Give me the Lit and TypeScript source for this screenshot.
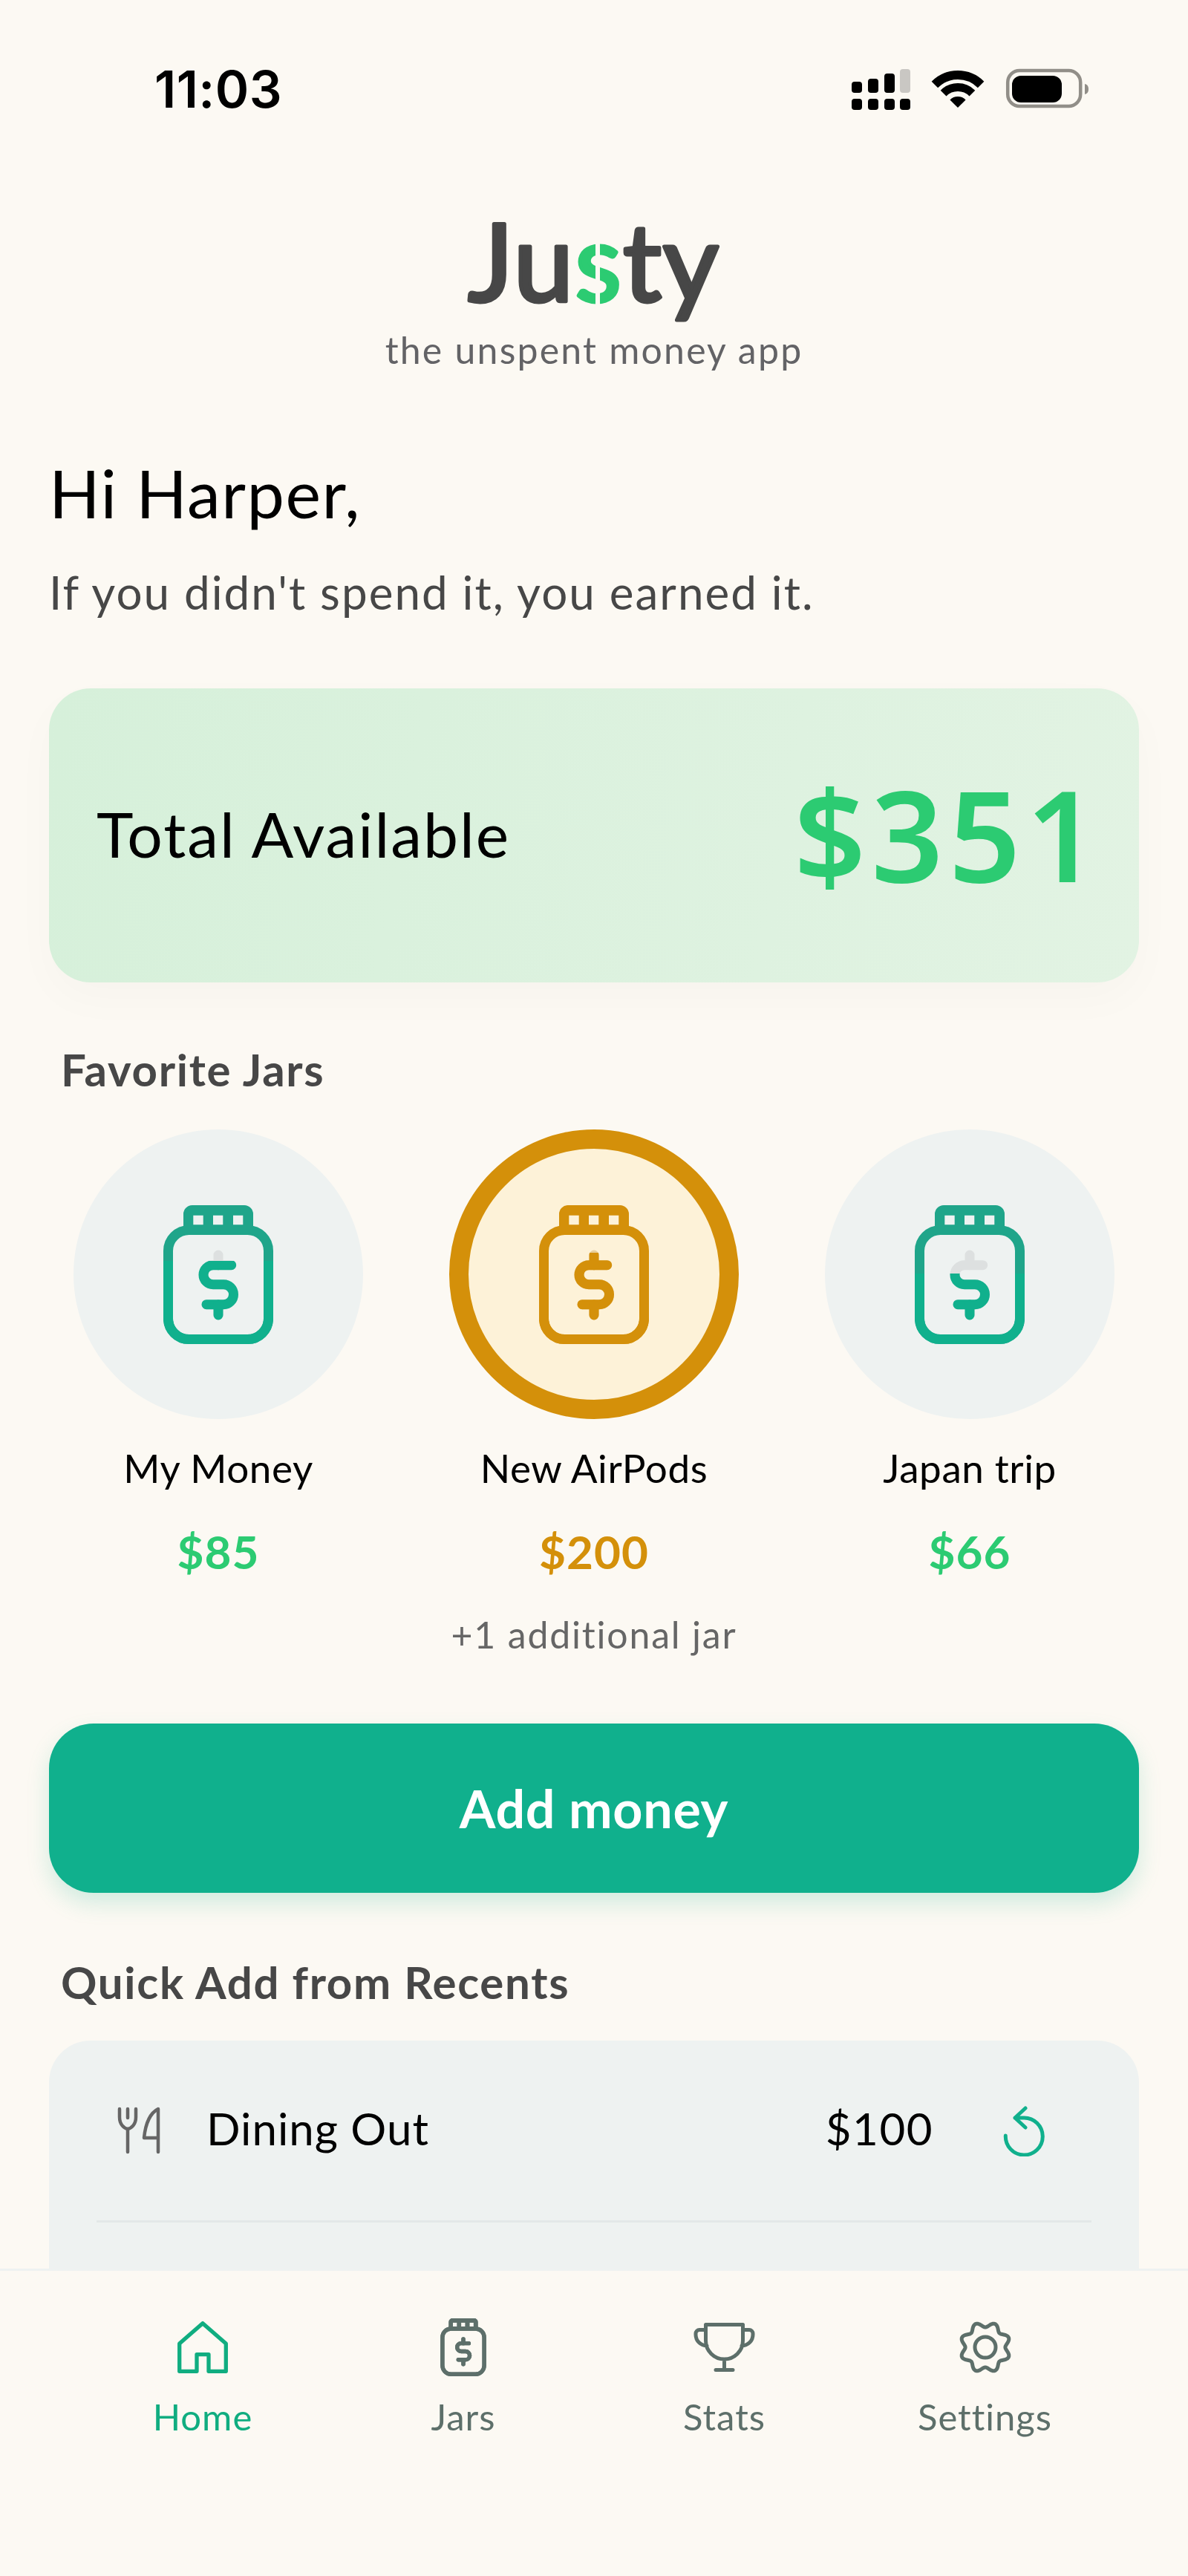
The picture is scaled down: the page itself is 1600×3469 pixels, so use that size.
import { LitElement, html, css, svg } from "lit";
import { customElement } from "lit/decorators.js";

const dollar = (c: string) => svg`<g fill="none" stroke="${c}" stroke-width="13" stroke-linecap="round" stroke-linejoin="round">
  <path d="M91.7 80.7H67a13 13 0 0 0 0 26H81a13.5 13.5 0 0 1 0 27H58"/><path d="M74 67V80.7M74 134V148"/></g>`;
const jarShell = (c: string) => svg`
  <rect x="6.5" y="33.5" width="135" height="147" rx="28" fill="none" stroke="${c}" stroke-width="13"/>
  <path fill="${c}" fill-rule="evenodd" d="M27 32V12A12 12 0 0 1 39 0H109A12 12 0 0 1 121 12V32ZM40.3 13.7V26.3H53.7V13.7ZM67 13.7V26.3H80.3V13.7ZM94 13.7V26.3H107.3V13.7Z"/>`;

function jar(id: string, level: number, top: string, bottom: string, dollarTop: string, cls = "jar") {
  return html`<svg class=${cls} viewBox="0 0 148 187">
    <defs><clipPath id=${id}><rect x="0" y=${level} width="148" height=${187 - level}></rect></clipPath></defs>
    ${jarShell(top)}${dollar(dollarTop)}
    <g clip-path="url(#${id})">${jarShell(bottom)}${dollar(bottom)}</g>
  </svg>`;
}

function gearPath() {
  const pts: string[] = [];
  for (let i = 0; i < 120; i++) {
    const t = (i / 120) * Math.PI * 2;
    const r = 30.5 - 3.6 * Math.cos(8 * t);
    pts.push(`${(37 + r * Math.sin(t)).toFixed(2)} ${(36 - r * Math.cos(t)).toFixed(2)}`);
  }
  return "M" + pts.join("L") + "Z";
}

const JARS = [
  { name: "My Money", amount: "$85", level: 75, selected: false },
  { name: "New AirPods", amount: "$200", level: 64, selected: true },
  { name: "Japan trip", amount: "$66", level: 92, selected: false },
];

@customElement("app-root")
export class AppRoot extends LitElement {
  static styles = css`
    :host { display: block; width: 1600px; height: 3469px; background: #fcf9f3; font-family: "Lato", "Noto Sans", sans-serif; color: #000; }
    .app { height: 3469px; display: flex; flex-direction: column; background: #fcf9f3; }
    .scroll { flex: 1; min-height: 0; overflow: hidden; }
    .status { display: flex; justify-content: space-between; align-items: center; height: 72px; padding: 84px 133px 0 208px; }
    .time { font: 600 69px/72px "Inter", "Liberation Sans", sans-serif; letter-spacing: 0.5px; color: #000; }
    .status-icons { display: block; width: 320px; height: 56px; }
    .logo { display: block; width: 400px; height: 150px; margin: 142px auto 0; overflow: visible; }
    .logo text { font: 400 145px "Lato", sans-serif; letter-spacing: 2px; stroke-width: 5px; stroke-linejoin: round; }
    .tag { text-align: center; font-size: 50px; letter-spacing: 2.2px; line-height: 60px; color: #636366; margin-top: -7px; }
    .hi { font-size: 90px; letter-spacing: 1.5px; line-height: 110px; margin: 107px 0 0 66px; }
    .sub { font-size: 62px; letter-spacing: 2px; line-height: 80px; color: #474747; margin: 39px 0 0 66px; }
    .total { display: flex; justify-content: space-between; align-items: center; margin: 90px 66px 0; height: 396px; padding: 0 48px 0 64px; border-radius: 56px; background: linear-gradient(100deg, #d6f0da, #e2f3e3); box-shadow: 0 22px 60px rgba(0, 0, 0, 0.025); }
    .total-label { font-size: 84px; letter-spacing: 2px; line-height: 100px; padding-bottom: 4px; }
    .total-value { font-family: "Noto Sans", sans-serif; font-size: 170px; font-weight: 600; letter-spacing: 7px; line-height: 200px; padding-bottom: 6px; color: #2ccb72; }
    .section { font-size: 60px; font-weight: 700; letter-spacing: 1.7px; line-height: 76px; color: #474747; margin: 79px 0 0 82px; }
    .jars { display: grid; grid-template-columns: 506px 506px 506px; margin: 43px 0 0 41px; }
    .jar-item { display: flex; flex-direction: column; align-items: center; }
    .circle { width: 390px; height: 390px; border-radius: 50%; background: #eef2f1; display: flex; align-items: center; justify-content: center; box-sizing: border-box; }
    .circle.sel { background: #fdf2d8; border: 26px solid #d4900a; }
    .jar { display: block; width: 148px; height: 187px; }
    .jar-name { font-size: 53px; letter-spacing: 0.6px; line-height: 64px; margin-top: 34px; color: #000; }
    .jar-amount { font-size: 62px; font-weight: 700; letter-spacing: 1px; line-height: 76px; margin-top: 42px; color: #2ccb72; }
    .jar-amount.sel { color: #d4900a; }
    .more { text-align: center; font-size: 50px; letter-spacing: 1.8px; line-height: 64px; color: #666; margin-top: 42px; }
    .add { display: flex; align-items: center; justify-content: center; height: 228px; margin: 88px 66px 0; border-radius: 60px; background: #10b08d; color: #fff; font-size: 70px; font-weight: 700; letter-spacing: 0.7px; box-shadow: 0 14px 30px rgba(16, 176, 141, 0.18); }
    .section.q { margin-top: 82px; }
    .recents { margin: 41px 66px 0; padding: 0 64px; height: 500px; border-radius: 56px 56px 0 0; background: #eef2f1; }
    .row { display: flex; align-items: center; height: 242px; border-bottom: 3px solid #e3e8e8; }
    .fork { width: 64px; height: 68px; margin: 0 0 0 25px; display: block; }
    .row-name { font-size: 60px; letter-spacing: 1px; margin-left: 59px; flex: 1; padding-bottom: 6px; }
    .row-val { font-size: 60px; letter-spacing: 1.5px; padding-bottom: 6px; }
    .redo { width: 60px; height: 70px; display: block; margin: 0 60px 0 93px; }
    .nav { height: 414px; box-sizing: border-box; border-top: 3px solid #eef2f1; background: #fcf9f3; display: grid; grid-template-columns: 350px 352px 351px 351px; padding: 63px 0 0 98px; position: relative; }
    .nav-item { display: flex; flex-direction: column; align-items: center; color: #5d6f6a; font-size: 49px; letter-spacing: 1px; }
    .nav-item.on { color: #10ad80; }
    .nav-ico { height: 80px; display: flex; align-items: center; justify-content: center; }
    .nav-ico svg { display: block; }
    .nav-label { line-height: 64px; margin-top: 21px; }
    .jar.small { width: 62px; height: 78px; }
  `;

  render() {
    return html`<div class="app">
      <div class="scroll">
        <div class="status">
          <div class="time">11:03</div>
          <svg class="status-icons" viewBox="0 0 320 56">
            <g fill="#000">
              ${[0, 22, 44, 65].map((x) => svg`<rect x=${x} y="41" width="14" height="15" rx="4"></rect>`)}
              <rect x="0" y="18" width="14" height="15" rx="4"></rect>
              <rect x="22" y="14" width="14" height="19" rx="4"></rect>
              <rect x="44" y="7" width="14" height="26" rx="4"></rect>
            </g>
            <rect x="65" y="1" width="14" height="32" rx="4" fill="#c9c7c3"></rect>
            <g transform="translate(109 3)">
              <path d="M2.9 18.9A44 44 0 0 1 65.1 18.9" fill="none" stroke="#000" stroke-width="12"></path>
              <path d="M14.6 30.6A27.5 27.5 0 0 1 53.4 30.6" fill="none" stroke="#000" stroke-width="11"></path>
              <path d="M34 50L23.4 39.4A15 15 0 0 1 44.6 39.4Z" fill="#000"></path>
            </g>
            <rect x="210.2" y="3" width="98" height="48" rx="16" fill="none" stroke="#918e88" stroke-width="4.5"></rect>
            <rect x="216" y="10" width="67" height="36" rx="12" fill="#000"></rect>
            <path d="M314 21C318 22 319 25 319 28C319 31 318 34 314 35Z" fill="#918e88"></path>
          </svg>
        </div>
        <svg class="logo" viewBox="0 0 400 150">
          <text x="200" y="108" text-anchor="middle" fill="#474747" stroke="#474747">Ju<tspan fill="#2ccb72" stroke="#2ccb72">s</tspan>ty</text>
          <rect x="202" y="28" width="6" height="84" fill="#fcf9f3"></rect>
        </svg>
        <div class="tag">the unspent money app</div>
        <div class="hi">Hi Harper,</div>
        <div class="sub">If you didn't spend it, you earned it.</div>
        <div class="total"><div class="total-label">Total Available</div><div class="total-value">$351</div></div>
        <div class="section">Favorite Jars</div>
        <div class="jars">
          ${JARS.map((j, i) => html`<div class="jar-item">
            <div class="circle ${j.selected ? "sel" : ""}">
              ${j.selected ? jar("j" + i, j.level, "#d4900a", "#d4900a", "#e8cf9c") : jar("j" + i, j.level, "#1fa58a", "#10b08d", "#dde0e0")}
            </div>
            <div class="jar-name">${j.name}</div>
            <div class="jar-amount ${j.selected ? "sel" : ""}">${j.amount}</div>
          </div>`)}
        </div>
        <div class="more">+1 additional jar</div>
        <div class="add">Add money</div>
        <div class="section q">Quick Add from Recents</div>
        <div class="recents">
          <div class="row">
            <svg class="fork" viewBox="0 0 64 68" fill="none" stroke="#666" stroke-width="4.5" stroke-linecap="round" stroke-linejoin="round">
              <path d="M6 5V16C6 26 12 31 17 32C22 31 28 26 28 16V5M17 5V17M17 32V63M58 63V5C48 10 41 24 39 44H58"></path>
            </svg>
            <div class="row-name">Dining Out</div>
            <div class="row-val">$100</div>
            <svg class="redo" viewBox="0 0 60 70" fill="none" stroke="#10b08d" stroke-width="5" stroke-linecap="round" stroke-linejoin="round">
              <path d="M17 18H29A25 25 0 1 1 4.3 42M31 5L17 18L31 31"></path>
            </svg>
          </div>
        </div>
      </div>
      <nav class="nav">
        <div class="nav-item on">
          <div class="nav-ico"><svg width="68" height="70" viewBox="0 0 68 70" fill="none" stroke="#10ad80" stroke-width="5.3" stroke-linejoin="round"><path d="M2.7 30L34 2.7L65.3 30V67.3H42V44.7H26V67.3H2.7Z"></path></svg></div>
          <div class="nav-label">Home</div>
        </div>
        <div class="nav-item">
          <div class="nav-ico">${jar("nj", 0, "#5d6f6a", "#5d6f6a", "#5d6f6a", "jar small")}</div>
          <div class="nav-label">Jars</div>
        </div>
        <div class="nav-item">
          <div class="nav-ico"><svg width="84" height="70" viewBox="0 0 84 70" fill="none" stroke="#5d6f6a" stroke-width="5" stroke-linecap="round" stroke-linejoin="round"><path d="M16.5 4.5H66.5V26A25 25 0 0 1 16.5 26ZM41.5 51V65M30 65.5H53M16.5 11.5H8A5 5 0 0 0 3 16.5V18A15 15 0 0 0 18 33M66.5 11.5H75A5 5 0 0 1 80 16.5V18A15 15 0 0 1 65 33"></path></svg></div>
          <div class="nav-label">Stats</div>
        </div>
        <div class="nav-item">
          <div class="nav-ico"><svg width="74" height="72" viewBox="0 0 74 72" fill="none" stroke="#5d6f6a" stroke-width="5" stroke-linejoin="round"><path d=${gearPath()}></path><circle cx="37" cy="36" r="14"></circle></svg></div>
          <div class="nav-label">Settings</div>
        </div>
      </nav>
    </div>`;
  }
}
